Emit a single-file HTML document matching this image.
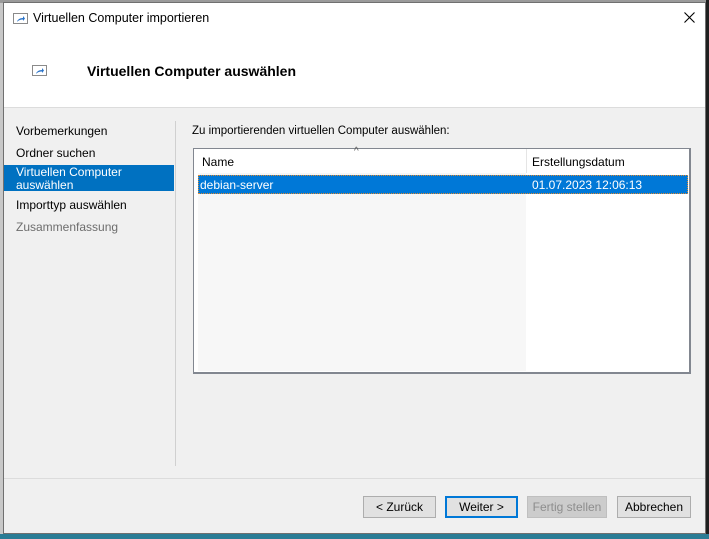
<!DOCTYPE html>
<html><head><style>
*{margin:0;padding:0;box-sizing:border-box}
body{width:709px;height:539px;overflow:hidden;background:#c8c8c8;font-family:"Liberation Sans",sans-serif;font-size:12px;color:#000;position:relative}
.a{position:absolute}
.win{left:3px;top:2px;width:703px;height:532px;background:#f0f0f0;border:1px solid #707070}
.btn{position:absolute;top:493px;height:22px;background:#e1e1e1;border:1px solid #adadad;text-align:center;line-height:20px;font-size:12px}
.ic{position:absolute;width:15px;height:11px;border:1px solid #8a8a8a;background:#fff}
.ic svg{position:absolute;left:2px;top:1px}
</style></head><body>
<div class="a" style="left:0;top:0;width:709px;height:3px;background:#9a9a9a"></div>
<div class="a" style="left:706px;top:0;width:3px;height:539px;background:#1f1f1f"></div>
<div class="a" style="left:0;top:534px;width:709px;height:5px;background:#2a7c95"></div>
<div class="a win">
 <div class="a" style="left:0;top:0;width:701px;height:104px;background:#fff"></div>
 <div class="ic" style="left:9px;top:10px"><svg width="10" height="8"><path d="M1 7 Q2 3 7 3 L7 1 L9 3.5 L7 6 L7 4.5 Q3 4.5 1 7Z" fill="#2a73c8"/></svg></div>
 <div class="a" style="left:29px;top:8px;font-size:12.5px">Virtuellen Computer importieren</div>
 <svg class="a" style="left:680px;top:9px" width="11" height="11"><path d="M0.5 0.5L10.5 10.5M10.5 0.5L0.5 10.5" stroke="#000" stroke-width="1.1"/></svg>
 <div class="ic" style="left:28px;top:62px"><svg width="10" height="8"><path d="M1 7 Q2 3 7 3 L7 1 L9 3.5 L7 6 L7 4.5 Q3 4.5 1 7Z" fill="#2a73c8"/></svg></div>
 <div class="a" style="left:83px;top:60px;font-size:14px;font-weight:bold">Virtuellen Computer auswählen</div>
 <div class="a" style="left:0;top:104px;width:701px;height:1px;background:#dcdcdc"></div>
 <div class="a" style="left:12px;top:121px">Vorbemerkungen</div>
 <div class="a" style="left:12px;top:143px">Ordner suchen</div>
 <div class="a" style="left:0;top:162px;width:170px;height:26px;background:#0071c1"></div>
 <div class="a" style="left:12px;top:163px;color:#fff;line-height:12.5px">Virtuellen Computer<br>auswählen</div>
 <div class="a" style="left:12px;top:195px">Importtyp auswählen</div>
 <div class="a" style="left:12px;top:217px;color:#6d6d6d">Zusammenfassung</div>
 <div class="a" style="left:171px;top:118px;width:1px;height:345px;background:#d0d0d0"></div>
 <div class="a" style="left:188px;top:122px;font-size:11.5px">Zu importierenden virtuellen Computer auswählen:</div>
 <div class="a" style="left:189px;top:145px;width:498px;height:226px;background:#fff;border:1px solid #828790;border-right:2px solid #828790;border-bottom:2px solid #828790">
  <div class="a" style="left:4px;top:24px;width:328px;height:198px;background:#f7f7f7"></div>
  <div class="a" style="left:332px;top:0;width:1px;height:24px;background:#e5e5e5"></div>
  <div class="a" style="left:160px;top:-3px;font-size:10px;color:#555">^</div>
  <div class="a" style="left:8px;top:6px;font-size:12px">Name</div>
  <div class="a" style="left:338px;top:6px;font-size:12px">Erstellungsdatum</div>
  <div class="a" style="left:4px;top:26px;width:490px;height:19px;background:#0078d7;border:1px dotted #e08a30"></div>
  <div class="a" style="left:6px;top:29px;color:#fff;font-size:12px">debian-server</div>
  <div class="a" style="left:338px;top:29px;color:#fff;font-size:12px">01.07.2023 12:06:13</div>
 </div>
 <div class="a" style="left:0;top:475px;width:701px;height:1px;background:#dcdcdc"></div>
 <div class="btn" style="left:359px;width:73px">&lt; Zurück</div>
 <div class="btn" style="left:441px;width:73px;border:2px solid #0078d7;line-height:18px">Weiter &gt;</div>
 <div class="btn" style="left:523px;width:80px;background:#cccccc;border-color:#bfbfbf;color:#8d8d8d">Fertig stellen</div>
 <div class="btn" style="left:613px;width:74px">Abbrechen</div>
</div>
</body></html>
